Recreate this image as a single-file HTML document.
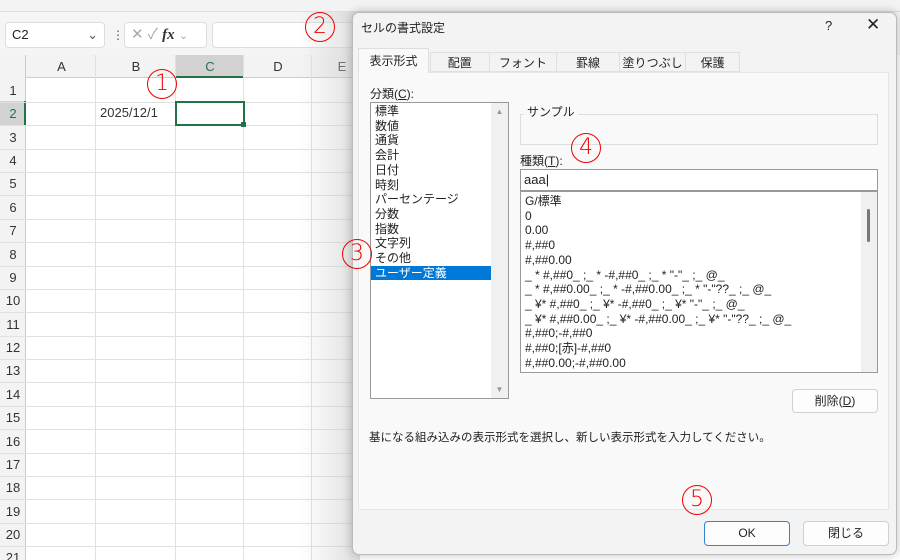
<!DOCTYPE html><html><head><meta charset="utf-8"><style>
*{margin:0;padding:0;box-sizing:border-box}
html,body{width:900px;height:560px;overflow:hidden}
body{background:#fff;position:relative;font-family:"Liberation Sans","Noto Sans CJK JP",sans-serif;color:#222}
.a{position:absolute}
.rc{position:absolute;border:1.2px solid #e00;border-radius:50%;color:#e00;font-size:22px;text-align:center;line-height:27px;width:30px;height:30px;font-family:"DejaVu Sans",sans-serif;font-weight:300}
.vl{position:absolute;top:55px;bottom:0;width:1px;background:#e1e1e1}
.hl{position:absolute;left:0;width:360px;height:1px;background:#e1e1e1}
.rn{position:absolute;left:0;width:26px;text-align:center;font-size:13px;color:#333}
.ch{position:absolute;top:55px;height:23px;text-align:center;font-size:13px;line-height:23px;color:#333}
.li{font-size:12px;line-height:14.7px;padding-left:4px;white-space:nowrap}
.btn{position:absolute;background:#fdfdfd;border:1px solid #d0d0d0;border-radius:4px;text-align:center;font-size:12px;line-height:22px}
</style></head><body>
<div class="a" style="left:0;top:0;width:900px;height:12px;background:#f3f3f3;border-bottom:1px solid #ddd"></div>
<div class="a" style="left:0;top:12px;width:900px;height:43px;background:#f5f5f5"></div>
<div class="a" style="left:5px;top:22px;width:100px;height:26px;background:#fff;border:1px solid #ddd;border-radius:4px;font-size:13px;line-height:24px;padding-left:6px">C2<span style="position:absolute;right:6px;color:#555">&#8964;</span></div>
<div class="a" style="left:112px;top:28px;font-size:12px;color:#555">⋮</div>
<div class="a" style="left:124px;top:22px;width:83px;height:26px;background:#fff;border:1px solid #ddd;border-radius:4px;font-size:15px;line-height:24px;color:#aaa;padding-left:6px">✕ ✓ <i style="color:#333;font-family:'Liberation Serif',serif;font-weight:bold">fx</i> <span style="font-size:11px">&#8964;</span></div>
<div class="a" style="left:212px;top:22px;width:160px;height:26px;background:#fff;border:1px solid #ddd;border-radius:4px"></div>
<div class="a" style="left:0;top:55px;width:360px;height:23px;background:#f3f3f3;border-bottom:1px solid #ccc"></div>
<div class="a" style="left:0;top:55px;width:26px;height:505px;background:#f3f3f3;border-right:1px solid #ccc"></div>
<div class="a" style="left:176px;top:55px;width:68px;height:23px;background:#d2d2d2;border-bottom:2px solid #217346"></div>
<div class="a" style="left:0;top:101px;width:26px;height:24px;background:#d2d2d2;border-right:2px solid #217346"></div>
<div class="ch" style="left:27px;width:69px">A</div><div class="ch" style="left:96px;width:80px">B</div><div class="ch" style="left:176px;width:68px;color:#217346">C</div><div class="ch" style="left:244px;width:68px">D</div><div class="ch" style="left:312px;width:60px">E</div>
<div class="vl" style="left:95px"></div><div class="vl" style="left:175px"></div><div class="vl" style="left:243px"></div><div class="vl" style="left:311px"></div>
<div id="rows"></div>
<div class="a" style="left:100px;top:105px;font-size:13px;color:#333">2025/12/1</div>
<div class="a" style="left:175px;top:101px;width:70px;height:25px;border:2px solid #217346"></div>
<div class="a" style="left:241px;top:122px;width:5px;height:5px;background:#217346"></div>
<div class="a" style="left:300px;top:12px;width:60px;height:548px;background:linear-gradient(90deg,rgba(255,255,255,0),rgba(200,200,200,.6))"></div>
<div class="a" style="left:352px;top:12px;width:545px;height:543px;background:#f3f3f3;border:1px solid #bbb;border-radius:7px;box-shadow:0 0 10px rgba(0,0,0,.25)"></div>
<div class="a" style="left:361px;top:19px;font-size:12px">セルの書式設定</div>
<div class="a" style="left:825px;top:18px;font-size:13px">?</div>
<div class="a" style="left:866px;top:15px;font-size:17px">✕</div>
<div class="a" style="left:358px;top:72px;width:531px;height:438px;background:#f9f9f9;border:1px solid #e6e6e6"></div>
<div class="a" style="left:358px;top:48px;width:71px;height:25px;background:#f9f9f9;border:1px solid #ddd;border-bottom:none;font-size:12px;line-height:24px;text-align:center">表示形式</div>
<div class="a" style="left:430px;top:52px;width:310px;height:20px;border:1px solid #e0e0e0;background:#f3f3f3;font-size:12px;line-height:20px;display:flex"><span style="width:59px;text-align:center;border-right:1px solid #e0e0e0">配置</span><span style="width:68px;text-align:center;border-right:1px solid #e0e0e0">フォント</span><span style="width:63px;text-align:center;border-right:1px solid #e0e0e0">罫線</span><span style="width:67px;text-align:center;border-right:1px solid #e0e0e0">塗りつぶし</span><span style="width:53px;text-align:center">保護</span></div>
<div class="a" style="left:370px;top:85px;font-size:12px">分類(<u>C</u>):</div>
<div class="a" style="left:370px;top:102px;width:139px;height:297px;background:#fff;border:1px solid #999;padding-top:1px">
<div class="li">標準</div><div class="li">数値</div><div class="li">通貨</div><div class="li">会計</div><div class="li">日付</div><div class="li">時刻</div><div class="li">パーセンテージ</div><div class="li">分数</div><div class="li">指数</div><div class="li">文字列</div><div class="li">その他</div><div class="li" style="background:#0078d7;color:#fff;width:120px">ユーザー定義</div>
<div class="a" style="right:0;top:0;width:17px;height:295px;background:#f0f0f0;color:#999;font-size:8px;text-align:center"><div style="margin-top:4px">▲</div><div style="position:absolute;bottom:4px;width:17px">▼</div></div></div>
<div class="a" style="left:520px;top:114px;width:358px;height:31px;border:1px solid #ddd"></div>
<div class="a" style="left:524px;top:103px;font-size:12px;background:#f9f9f9;padding:0 3px">サンプル</div>
<div class="a" style="left:520px;top:152px;font-size:12px">種類(<u>T</u>):</div>
<div class="a" style="left:520px;top:169px;width:358px;height:22px;background:#fff;border:1px solid #999;font-size:13px;line-height:20px;padding-left:3px">aaa|</div>
<div class="a" style="left:520px;top:191px;width:358px;height:182px;background:#fff;border:1px solid #999;overflow:hidden;padding-top:2px">
<div class="li">G/標準</div><div class="li">0</div><div class="li">0.00</div><div class="li">#,##0</div><div class="li">#,##0.00</div><div class="li">_ * #,##0_ ;_ * -#,##0_ ;_ * "-"_ ;_ @_</div><div class="li">_ * #,##0.00_ ;_ * -#,##0.00_ ;_ * "-"??_ ;_ @_</div><div class="li">_ ¥* #,##0_ ;_ ¥* -#,##0_ ;_ ¥* "-"_ ;_ @_</div><div class="li">_ ¥* #,##0.00_ ;_ ¥* -#,##0.00_ ;_ ¥* "-"??_ ;_ @_</div><div class="li">#,##0;-#,##0</div><div class="li">#,##0;[赤]-#,##0</div><div class="li">#,##0.00;-#,##0.00</div>
<div class="a" style="right:0;top:0;width:16px;height:180px;background:#f0f0f0"><div style="position:absolute;left:6px;top:17px;width:3px;height:33px;background:#777;border-radius:2px"></div></div></div>
<div class="btn" style="left:792px;top:389px;width:86px;height:24px">削除(<u>D</u>)</div>
<div class="a" style="left:369px;top:429px;font-size:11.5px">基になる組み込みの表示形式を選択し、新しい表示形式を入力してください。</div>
<div class="btn" style="left:704px;top:521px;width:86px;height:25px;border-color:#3a82d0;line-height:23px">OK</div>
<div class="btn" style="left:803px;top:521px;width:86px;height:25px;line-height:23px">閉じる</div>
<div class="rc" style="left:147px;top:69px">1</div>
<div class="rc" style="left:305px;top:12px">2</div>
<div class="rc" style="left:342px;top:239px">3</div>
<div class="rc" style="left:571px;top:133px">4</div>
<div class="rc" style="left:682px;top:485px">5</div>
<script>
var h='';for(var i=1;i<=21;i++){var t=79+(i-1)*23.37;h+='<div class="hl" style="top:'+(t+23)+'px"></div><div class="rn" style="top:'+(t+4)+'px;'+(i==2?'color:#217346':'')+'">'+i+'</div>';}document.getElementById('rows').innerHTML=h;
</script>
</body></html>
